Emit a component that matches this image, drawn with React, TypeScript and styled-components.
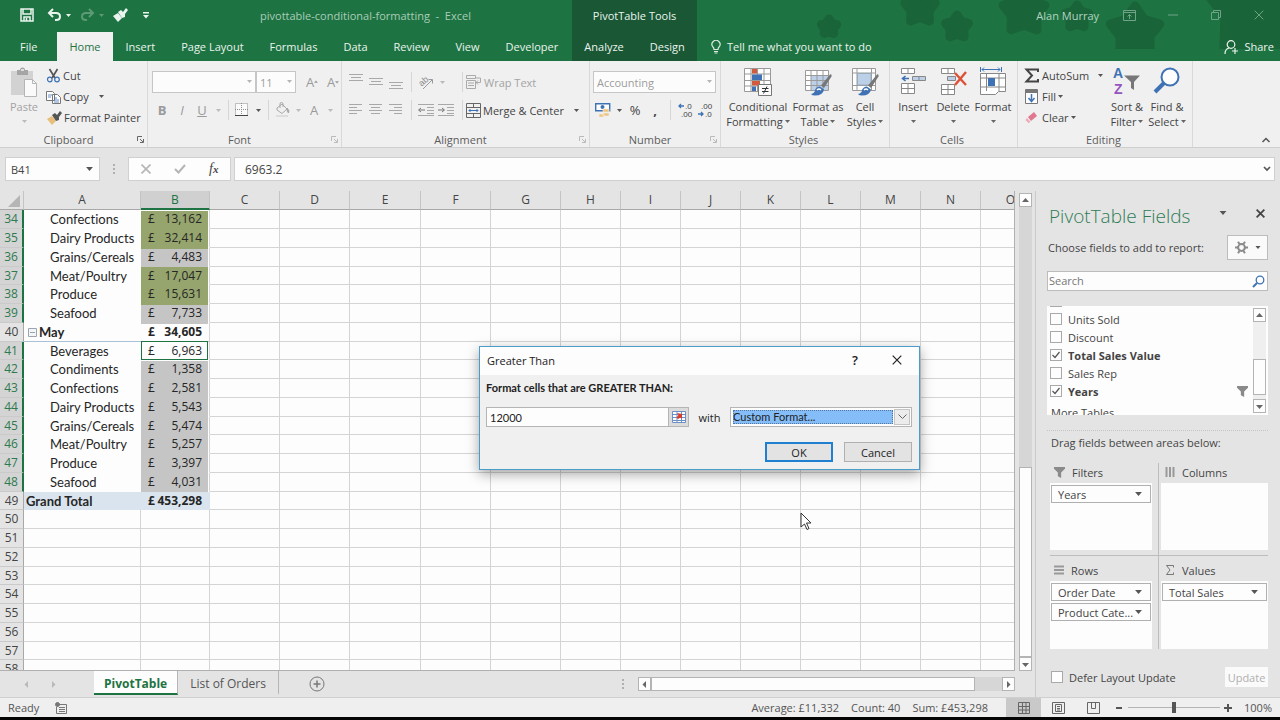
import React, { ReactNode } from 'react';
import styled, { createGlobalStyle, css } from 'styled-components';

const green = '#1e7342';
const ui = '"Open Sans", "Noto Sans", sans-serif';
const sheetFont = 'Lato, "Open Sans", sans-serif';

const GlobalStyle = createGlobalStyle`
  *, *::before, *::after { box-sizing: border-box; }
  body { margin: 0; background: #e4e4e4; overflow: hidden; }
  button, input, select { font: inherit; color: inherit; margin: 0; padding: 0; }
  button { border: 0; background: transparent; }
  svg { display: block; flex: none; }
`;

const Page = styled.div`
  position: relative;
  display: flex;
  flex-direction: column;
  height: 100vh;
  overflow: hidden;
  border-bottom: 3px solid #050505;
  background: #e4e4e4;
  color: #444;
  font: 11px/15px ${ui};
`;

/* ---------- header ---------- */

const Header = styled.header`
  position: relative;
  display: flex;
  flex: none;
  height: 61px;
  background: ${green};
  color: #eaf4ee;
`;
const Confetti = styled.svg`
  position: absolute;
  top: 0;
  right: 0;
`;
const HeaderMain = styled.div`
  display: flex;
  flex-direction: column;
  width: 572px;
`;
const TitleRow = styled.div`
  display: flex;
  align-items: center;
  height: 32px;
  padding-bottom: 2px;
`;
const QuickAccess = styled.div`
  display: flex;
  align-items: center;
  width: 159px;
  padding-left: 20px;
`;
const QuickButton = styled.button<{ $w: number; $dim?: boolean }>`
  display: flex;
  align-items: center;
  width: ${(p) => p.$w}px;
  height: 22px;
  opacity: ${(p) => (p.$dim ? 0.3 : 1)};
`;
const DocTitle = styled.div`
  flex: 1;
  text-align: center;
  color: #a9cdb8;
  white-space: pre;
`;
const TabRow = styled.nav`
  display: flex;
  height: 29px;
  padding-left: 7px;
`;
const RibbonTab = styled.button<{ $active?: boolean; $first?: boolean }>`
  padding: 0 ${(p) => (p.$active ? 12 : 13)}px;
  margin-right: ${(p) => (p.$first ? 7 : 0)}px;
  background: ${(p) => (p.$active ? '#f0f0f0' : 'transparent')};
  color: ${(p) => (p.$active ? green : '#eaf4ee')};
  white-space: nowrap;
`;
const Context = styled.div`
  display: flex;
  flex-direction: column;
  width: 125px;
  background: #195735;
`;
const ContextTitle = styled(TitleRow)`
  justify-content: center;
`;
const ContextTabs = styled.nav`
  display: flex;
  justify-content: center;
  height: 29px;
`;
const HeaderEnd = styled.div`
  display: flex;
  flex: 1;
  flex-direction: column;
`;
const HeaderTools = styled(HeaderEnd)`
  position: relative;
`;
const WindowRow = styled(TitleRow)`
  justify-content: flex-end;
  color: #b4d3c1;
`;
const WindowButton = styled.button`
  display: flex;
  align-items: center;
  justify-content: center;
  width: 43px;
  height: 30px;
  color: #6fa487;
`;
const UserName = styled.span`
  margin-right: 9px;
`;
const TellRow = styled.div`
  display: flex;
  align-items: center;
  justify-content: space-between;
  height: 29px;
  padding: 0 6px 0 14px;
`;
const HeaderAction = styled.button`
  display: flex;
  align-items: center;
  gap: 6px;
`;

/* ---------- ribbon ---------- */

const RibbonBar = styled.div`
  display: flex;
  flex: none;
  height: 87px;
  background: #f0f0f0;
  border-bottom: 1px solid #cfcfcf;
`;
const GroupBox = styled.section<{ $w: number }>`
  display: flex;
  flex-direction: column;
  flex: none;
  width: ${(p) => p.$w}px;
  border-right: 1px solid #d9d9d9;
`;
const GroupBody = styled.div<{ $pad: number }>`
  display: flex;
  flex: 1;
  padding-left: ${(p) => p.$pad}px;
`;
const GroupLabel = styled.footer`
  display: flex;
  align-items: center;
  height: 16px;
  padding-right: 3px;
  color: #5c5c5c;

  span { flex: 1; text-align: center; }
`;
const BigButton = styled.button<{ $w: number; $off?: boolean }>`
  display: flex;
  flex-direction: column;
  align-items: center;
  flex: none;
  width: ${(p) => p.$w}px;
  padding-top: 5px;
  color: ${(p) => (p.$off ? '#a3a3a3' : '#444')};
  white-space: nowrap;

  > svg { margin-bottom: 1px; }
`;
const BigLine = styled.span`
  display: flex;
  align-items: center;
  justify-content: center;
  gap: 2px;
  height: 15px;
`;
const SmallColumn = styled.div`
  display: flex;
  flex-direction: column;
  padding: 4px 0 0 6px;
`;
const SmallButton = styled.button<{ $off?: boolean }>`
  display: flex;
  align-items: center;
  gap: 2px;
  height: 21px;
  color: ${(p) => (p.$off ? '#a3a3a3' : '#444')};
  white-space: nowrap;
`;
const Spread = styled.span<{ $w: number }>`
  width: ${(p) => p.$w}px;
  text-align: left;
`;
const ToolRows = styled.div`
  display: flex;
  flex-direction: column;
  gap: 6px;
  padding-top: 10px;
`;
const ToolRow = styled.div`
  display: flex;
  align-items: center;
  height: 22px;
`;
const Tool = styled.button<{ $w?: number; $off?: boolean }>`
  display: flex;
  align-items: center;
  justify-content: center;
  width: ${(p) => p.$w ?? 20}px;
  height: 22px;
  color: ${(p) => (p.$off ? '#9a9a9a' : '#444')};
  font-size: 13px;
`;
const ToolSep = styled.span<{ $w: number }>`
  display: flex;
  justify-content: center;
  width: ${(p) => p.$w}px;
  height: 20px;

  &::before { content: ''; width: 1px; background: #d6d6d6; }
`;
const Slot = styled.div<{ $w: number }>`
  display: flex;
  align-items: center;
  width: ${(p) => p.$w}px;
`;
const Combo = styled.span<{ $w: number }>`
  position: relative;
  display: flex;
  width: ${(p) => p.$w}px;
  height: 22px;

  select {
    width: 100%;
    padding-left: 3px;
    appearance: none;
    border: 1px solid #c6c6c6;
    border-radius: 0;
    background: #fcfcfc;
    color: #9d9d9d;
  }
  svg { position: absolute; top: 9px; right: 4px; color: #b5b5b5; pointer-events: none; }
`;
const RibbonEnd = styled.div`
  display: flex;
  flex: 1;
  align-items: flex-end;
  justify-content: flex-end;
  padding: 0 9px 2px 0;
`;

/* ---------- formula bar ---------- */

const FormulaBar = styled.div`
  display: flex;
  flex: none;
  height: 43px;
  padding: 9px 5px 10px;
  font-size: 12px;
`;
const NameBox = styled.label`
  display: flex;
  align-items: center;
  width: 95px;
  padding-right: 6px;
  border: 1px solid #d0d0d0;
  background: #fdfdfd;

  input { flex: 1; min-width: 0; padding-left: 5px; border: 0; background: none; font-size: 11px; }
`;
const Grip = styled.span`
  display: flex;
  align-items: center;
  justify-content: center;
  width: 28px;
`;
const FormulaButtons = styled.div`
  display: flex;
  align-items: center;
  justify-content: space-around;
  width: 103px;
  margin-right: 3px;
  border: 1px solid #d0d0d0;
  background: #fdfdfd;
`;
const FxButton = styled.button`
  font: italic 14px/16px "Liberation Serif", serif;

  sub { font-size: 11px; font-weight: 700; vertical-align: baseline; }
`;
const FormulaInput = styled(NameBox)`
  flex: 1;
  padding-right: 3px;

  input { padding-left: 10px; font-size: 12px; }
`;

/* ---------- worksheet ---------- */

const Workspace = styled.main`
  display: flex;
  flex: 1;
  min-height: 0;
`;
const SheetArea = styled.div`
  display: flex;
  flex: 1;
  flex-direction: column;
  min-width: 0;
  border-right: 1px solid #cacaca;
`;
const GridRow = styled.div`
  display: flex;
  flex: 1;
  min-height: 0;
`;
const GridClip = styled.div`
  flex: 1;
  min-width: 0;
  overflow: hidden;
  border-right: 1px solid #b0b0b0;
  border-bottom: 1px solid #b0b0b0;
  background: #fdfdfd;
`;
const Grid = styled.table`
  width: 1041px;
  table-layout: fixed;
  border-collapse: separate;
  border-spacing: 0;
  font-size: 12px;
  line-height: 16px;

  td, th { padding: 0; font-weight: 400; }
  thead tr { height: 19px; }
  tbody tr { height: 19px; }
  tbody tr:nth-child(4n) { height: 18px; }
`;
const ColumnHead = styled.th<{ $on?: boolean }>`
  border-right: 1px solid #c4c4c4;
  border-bottom: ${(p) => (p.$on ? `2px solid ${green}` : '1px solid #a8a8a8')};
  background: ${(p) => (p.$on ? '#d0d0d0' : '#e4e4e4')};
  color: ${(p) => (p.$on ? green : '#444')};
`;
const Corner = styled(ColumnHead)`
  svg { margin: 2px 3px 0 auto; }
`;
const RowHead = styled.th<{ $on?: boolean }>`
  border-bottom: 1px solid #cacaca;
  border-right: ${(p) => (p.$on ? `2px solid ${green}` : '1px solid #a8a8a8')};
  background: ${(p) => (p.$on ? '#d4d4d4' : '#e4e4e4')};
  color: ${(p) => (p.$on ? '#2d7a50' : '#444')};
`;
const Cell = styled.td`
  border-right: 1px solid #d4d4d4;
  border-bottom: 1px solid #d4d4d4;
`;
type RowKind = 'item' | 'group' | 'total';
const kindStyle = css<{ $kind: RowKind }>`
  border-bottom: 1px solid ${(p) => (p.$kind === 'group' ? '#a9c2d8' : p.$kind === 'total' ? '#dae4ef' : 'transparent')};
  background: ${(p) => (p.$kind === 'total' ? '#dae4ef' : 'transparent')};
  && { font-weight: ${(p) => (p.$kind === 'item' ? 400 : 700)}; }
  color: #262626;
`;
const LabelCell = styled.td<{ $kind: RowKind }>`
  ${kindStyle}
  font-family: ${sheetFont};
  font-size: 13px;
  font-variant-ligatures: none;
  white-space: nowrap;
`;
const Label = styled.div<{ $kind: RowKind }>`
  display: flex;
  align-items: center;
  gap: 2px;
  height: 16px;
  padding-left: ${(p) => ({ item: 26, group: 4, total: 2 })[p.$kind]}px;
`;
const MoneyCell = styled.td<{ $kind: RowKind }>`
  ${kindStyle}
  border-right: 1px solid ${(p) => (p.$kind === 'total' ? '#dae4ef' : '#d4d4d4')};
`;
const fills = { green: '#95a56d', grey: '#c5c5c5', none: 'transparent', active: '#fdfdfd' };
const Money = styled.div<{ $fill: keyof typeof fills }>`
  display: flex;
  align-items: center;
  justify-content: space-between;
  height: 17px;
  margin: 0 2px 0 1px;
  padding: 0 5px 0 6px;
  background: ${(p) => fills[p.$fill]};
  box-shadow: ${(p) =>
    p.$fill === 'active' ? `0 0 0 1px ${green}` : p.$fill === 'none' ? 'none' : `0 1px 0 1px ${fills[p.$fill]}`};
`;

const VScroll = styled.div`
  display: flex;
  flex-direction: column;
  width: 13px;
  margin: 2px 3px 0 4px;
  background: #d6d6d6;
`;
const HScroll = styled.div`
  display: flex;
  width: 377px;
  height: 14px;
  background: #d6d6d6;
`;
const ScrollButton = styled.button`
  display: flex;
  align-items: center;
  justify-content: center;
  flex: none;
  width: 13px;
  height: 14px;
  border: 1px solid #b4b4b4;
  background: #fdfdfd;
  color: #666;
`;
const Thumb = styled.span<{ $grow: number }>`
  flex: ${(p) => p.$grow};
  border: 1px solid #b4b4b4;
  background: #fdfdfd;
`;
const Space = styled.span<{ $grow: number }>`
  flex: ${(p) => p.$grow};
`;

const SheetTabs = styled.div`
  display: flex;
  align-items: center;
  flex: none;
  height: 26px;
  padding-right: 20px;
  color: #b9b9b9;
`;
const SheetNav = styled.div`
  display: flex;
  align-items: center;
  justify-content: center;
  gap: 20px;
  width: 94px;
  padding-right: 14px;
`;
const SheetTab = styled.button<{ $active?: boolean }>`
  align-self: flex-start;
  height: 24px;
  padding: 2px ${(p) => (p.$active ? 10 : 12)}px 0;
  border-bottom: ${(p) => (p.$active ? `2px solid ${green}` : '2px solid transparent')};
  border-right: 1px solid #b5b5b5;
  background: ${(p) => (p.$active ? '#fdfdfd' : 'transparent')};
  color: ${(p) => (p.$active ? green : '#555')};
  font-size: 12px;
  font-weight: ${(p) => (p.$active ? 700 : 400)};
`;
const AddSheet = styled.button`
  display: flex;
  margin-left: 30px;
  color: #777;
`;
const TabsGrip = styled.span`
  margin: 0 14px 0 auto;
`;

/* ---------- fields pane ---------- */

const Pane = styled.aside`
  display: flex;
  flex-direction: column;
  flex: none;
  width: 244px;
  padding: 10px 12px 0 11px;
`;
const PaneHead = styled.div`
  display: flex;
  align-items: center;
  height: 30px;

  h2 { flex: 1; margin: 0; padding-left: 2px; color: #2f7c54; font-size: 19px; font-weight: 300; line-height: 26px; white-space: nowrap; }
`;
const PaneIcon = styled.button`
  display: flex;
  width: 10px;
  height: 18px;
  align-items: center;
  justify-content: center;
  margin: 0 0 6px 29px;

  & + & { margin-right: 7px; }
`;
const ChooseRow = styled.div`
  display: flex;
  align-items: center;
  justify-content: space-between;
  height: 26px;
  margin-top: 3px;
  padding-left: 1px;
`;
const GearButton = styled.button`
  display: flex;
  align-items: center;
  justify-content: center;
  gap: 7px;
  width: 41px;
  height: 25px;
  border: 1px solid #bcbcbc;
  background: #fafafa;
`;
const SearchBox = styled.label`
  display: flex;
  align-items: center;
  flex: none;
  height: 20px;
  margin-top: 11px;
  padding-right: 2px;
  border: 1px solid #bcbcbc;
  background: #fdfdfd;

  input { flex: 1; min-width: 0; padding: 0 0 2px 1px; border: 0; background: none; line-height: 15px; }
  input::placeholder { color: #777; opacity: 1; }
`;
const FieldBox = styled.div`
  display: flex;
  flex: none;
  height: 109px;
  margin-top: 15px;
  padding: 0 2px 0 3px;
  background: #fdfdfd;
  overflow: hidden;
`;
const FieldList = styled.div`
  display: flex;
  flex-direction: column;
  flex: 1;
  margin-top: -14px;
`;
const Check = styled.label<{ $bold?: boolean }>`
  display: flex;
  align-items: center;
  flex: none;
  gap: 6px;
  height: 18px;
  font-weight: ${(p) => (p.$bold ? 700 : 400)};

  input {
    width: 12px;
    height: 12px;
    appearance: none;
    border: 1px solid #a9a9a9;
    background: #fdfdfd;
  }
  input:checked {
    background: #fdfdfd url("data:image/svg+xml,%3Csvg xmlns='http://www.w3.org/2000/svg' viewBox='0 0 10 10'%3E%3Cpath d='M1.5 5l2.5 2.5L8.5 2' fill='none' stroke='%23555' stroke-width='1.2'/%3E%3C/svg%3E");
  }
  svg { margin: 0 5px 0 auto; }
`;
const NextTable = styled.div`
  height: 18px;
  margin-top: 5px;
  padding-left: 1px;
`;
const FieldScroll = styled(VScroll)`
  height: 105px;
  margin: 2px 0 0;
  background: #efefef;
`;
const Divider = styled.hr`
  width: 100%;
  margin: 15px 0 4px;
  border: 0;
  border-top: 1px dotted #c4c4c4;
`;
const DragText = styled.div`
  padding-left: 4px;
  line-height: 16px;
`;
const Areas = styled.div`
  display: grid;
  grid-template-columns: 1fr 1fr;
  flex: none;
  margin: 12px 0 0 3px;
`;
const Area = styled.section<{ $side: 'left' | 'right'; $last?: boolean }>`
  height: 93px;
  padding: ${(p) => (p.$last ? 5 : 0)}px ${(p) => (p.$side === 'left' ? 6 : 0)}px 0 ${(p) => (p.$side === 'left' ? 0 : 2)}px;
  border-right: ${(p) => (p.$side === 'left' ? '1px solid #bdbdbd' : '0')};
  border-bottom: ${(p) => (p.$last ? '0' : '1px solid #bdbdbd')};

  h3 { display: flex; align-items: center; gap: 7px; height: 20px; margin: 0; padding: 0 0 2px 4px; font-size: 11px; font-weight: 400; }
`;
const DropZone = styled.div`
  display: flex;
  flex-direction: column;
  gap: 2px;
  height: 68px;
  padding: 2px 1px;
  background: #fdfdfd;
`;
const ShortDropZone = styled(DropZone)`
  height: 67px;
`;
const Pill = styled.button`
  display: flex;
  align-items: center;
  justify-content: space-between;
  height: 18px;
  padding: 0 8px 0 6px;
  border: 1px solid #b0b0b0;
  background: #fdfdfd;
  white-space: nowrap;
`;
const PaneFoot = styled.div`
  display: flex;
  align-items: center;
  justify-content: space-between;
  margin: 18px 0 0 4px;
`;
const UpdateButton = styled.button`
  width: 43px;
  height: 20px;
  background: #fafafa;
  color: #b0b0b0;
`;

/* ---------- status bar ---------- */

const Status = styled.footer`
  display: flex;
  align-items: center;
  flex: none;
  height: 20px;
  padding: 0 8px;
  border-top: 1px solid #cfcfcf;
  background: #efefef;
  color: #555;
`;
const Totals = styled.div`
  display: flex;
  gap: 12px;
  margin: 0 18px 0 auto;
`;
const ViewButton = styled.button<{ $on?: boolean }>`
  display: flex;
  align-items: center;
  justify-content: center;
  width: 35px;
  height: 19px;
  background: ${(p) => (p.$on ? '#c9c9c9' : 'transparent')};
  color: #666;
`;
const ZoomButton = styled.button`
  display: flex;
  width: 9px;
  margin: 0 4px;
`;
const ZoomRange = styled.input`
  width: 92px;
  height: 12px;
  appearance: none;
  background: linear-gradient(#b5b5b5, #b5b5b5) center / 100% 1px no-repeat;

  &::-webkit-slider-thumb { appearance: none; width: 4px; height: 11px; background: #555; }
`;
const ZoomValue = styled.span`
  width: 35px;
  text-align: right;
`;

/* ---------- dialog ---------- */

const Dialog = styled.div`
  position: absolute;
  top: 346px;
  left: 479px;
  width: 441px;
  border: 1px solid #4a9cc9;
  background: #f0f0f0;
  box-shadow: 0 4px 12px rgba(0, 0, 0, 0.35);
  color: #222;
  font-size: 11px;
`;
const DialogTitle = styled.div`
  display: flex;
  align-items: center;
  height: 28px;
  padding: 0 16px 2px 7px;
  background: #fdfdfd;

  span { flex: 1; }
`;
const DialogIcon = styled.button`
  display: flex;
  justify-content: center;
  width: 12px;
  margin-left: 30px;
  font-size: 13px;
  font-weight: 600;
`;
const DialogBody = styled.form`
  display: flex;
  flex-direction: column;
  padding: 5px 7px 7px 6px;
`;
const DialogPrompt = styled.label`
  font-family: ${sheetFont};
  font-weight: 700;
  line-height: 16px;
`;
const DialogFields = styled.div`
  display: flex;
  align-items: center;
  height: 20px;
  margin-top: 11px;
`;
const RefBox = styled.span`
  display: flex;
  width: 203px;
  height: 20px;
  border: 1px solid #b5b5b5;
  background: #fdfdfd;

  input { flex: 1; min-width: 0; padding-left: 3px; border: 0; background: none; font-family: ${sheetFont}; }
  button { display: flex; align-items: center; justify-content: center; width: 20px; background: #dcdcdc; border-left: 1px solid #b5b5b5; }
`;
const WithText = styled.label`
  width: 41px;
  text-align: center;
`;
const FormatSelect = styled.span`
  position: relative;
  display: flex;
  flex: 1;
  height: 20px;
  padding: 2px;
  border: 1px solid #b5b5b5;
  background: #fdfdfd;

  select {
    width: 100%;
    height: 14px;
    margin-right: 16px;
    appearance: none;
    border: 0;
    border-radius: 0;
    outline: 1px dotted #55759b;
    outline-offset: -1px;
    background: #84bdf8;
    font-family: ${sheetFont};
    line-height: 14px;
  }
  span { position: absolute; top: 1px; right: 1px; display: flex; align-items: center; justify-content: center; width: 16px; height: 16px; border: 1px solid #c4c4c4; background: #ececec; pointer-events: none; }
`;
const DialogActions = styled.div`
  display: flex;
  justify-content: flex-end;
  gap: 11px;
  margin-top: 15px;
`;
const DialogButton = styled.button<{ $primary?: boolean }>`
  width: 68px;
  height: 20px;
  border: ${(p) => (p.$primary ? '2px solid #1f7fd1' : '1px solid #b0b0b0')};
  background: #e3e3e3;
`;
const Pointer = styled.svg`
  position: absolute;
  top: 512px;
  left: 800px;
`;

/* ---------- icons ---------- */

const Down = ({ c = 'currentColor', s = 5 }: { c?: string; s?: number }) => (
  <svg width={s} height={Math.ceil(s / 2)} viewBox="0 0 6 3.500"><path d="M0 0h6L3 3.500z" fill={c} /></svg>
);
const Tri = ({ dir, s = 7 }: { dir: 'up' | 'down' | 'left' | 'right'; s?: number }) => (
  <svg width={s} height={s} viewBox="0 0 7 7">
    <path d={{ up: 'M0 5h7L3.500 1z', down: 'M0 2h7L3.500 6z', left: 'M5 0v7L1.500 3.500z', right: 'M2 0v7L5.500 3.500z' }[dir]} fill="currentColor" />
  </svg>
);
const Dots = () => (
  <svg width="2" height="10" viewBox="0 0 2 10"><path d="M0 1h2M0 5h2M0 9h2" stroke="#b0b0b0" strokeWidth="2" /></svg>
);
const Launcher = ({ off }: { off?: boolean }) => (
  <svg width="7" height="7" viewBox="0 0 7 7" fill="none" stroke={off ? '#bbb' : '#666'}><path d="M.5 5V.500H5M3 3l3 3M6.500 3v3.500H3" /></svg>
);
const Lines = ({ rows }: { rows: [number, number][] }) => (
  <svg width="14" height="14" viewBox="0 0 14 14" stroke="#a8a8a8">
    {rows.map(([x, w], i) => <path key={i} d={`M${x} ${i * 3 + 1.5}h${w}`} />)}
  </svg>
);
const VLines = ({ top }: { top: number }) => (
  <svg width="14" height="22" viewBox="0 0 14 22" stroke="#a8a8a8"><path d={`M0 ${top - 1.5}h14M2 ${top + 1.5}h10M0 ${top + 4.5}h14`} /></svg>
);
const Indent = ({ dir }: { dir: 'in' | 'out' }) => (
  <svg width="16" height="14" viewBox="0 0 16 14" fill="none" stroke="#a8a8a8">
    <path d="M0 1.500h16M9 4.500h7M9 7.500h7M9 10.500h7M0 12.500h16" />
    <path stroke="#777" d={dir === 'in' ? 'M0 7h6M4 5l2.500 2L4 9' : 'M7 7H1M3 5L.500 7L3 9'} />
  </svg>
);
const Scissors = () => (
  <svg width="15" height="15" viewBox="0 0 15 15" fill="none">
    <path d="M3.500 1l5.500 9M11.500 1L6 10" stroke="#555" strokeWidth="1.700" />
    <circle cx="3.800" cy="11.500" r="2.300" stroke="#3f72b5" strokeWidth="1.200" /><circle cx="11" cy="11.500" r="2.300" stroke="#3f72b5" strokeWidth="1.200" />
  </svg>
);
const CopyIcon = () => (
  <svg width="15" height="14" viewBox="0 0 15 14" fill="#fff" stroke="#777">
    <path d="M.5 1.500h6l2 2v7h-8zM6.500 4.500h5l3 3v6h-8z" /><path d="M2 5h4M2 7h3M8 8h3M8 10h5M8 12h5" stroke="#3f72b5" strokeWidth=".8" />
  </svg>
);
const Brush = ({ handle, tip }: { handle: string; tip: string }) => (
  <svg width="16" height="16" viewBox="0 0 16 16">
    <path d="M1 9l5-3 4 5-4 4z" fill={tip} /><path d="M6 5l3-2 2 2 3-4 2 2-3 4 0 3-3 1z" fill={handle} />
  </svg>
);
const PasteIcon = () => (
  <svg width="28" height="32" viewBox="0 0 28 32">
    <path d="M1 5h22v24H1z" fill="#d2d2d2" /><path d="M7 9V4h3q0-2.500 2.500-2.500T15 4h3v5z" fill="#a5a5a5" /><path d="M11 4h3" stroke="#f0f0f0" strokeWidth="1.500" />
    <path d="M14.500 13.500h8l4 4v13h-12z" fill="#fafafa" stroke="#b5b5b5" /><path d="M22.500 13.500v4h4" fill="none" stroke="#b5b5b5" />
  </svg>
);
const BordersIcon = () => (
  <svg width="14" height="14" viewBox="0 0 14 14" fill="none" stroke="#8c8c8c"><path fill="#fbfbfb" d="M.5.500h12v12H.5zM6.500 0v13M0 6.500h13" strokeDasharray="1 1" /><path d="M0 12.500h13" stroke="#444" /></svg>
);
const Bucket = () => (
  <svg width="15" height="16" viewBox="0 0 15 16" fill="none" stroke="#a8a8a8"><path d="M2 6l5-4 5 5-5 4.500L2 8zM5 6V2q0-1.500 1.500-1.500T8 2v3" /><path d="M12 6q3 3 1.500 5-1.500-1-1.500-5z" fill="#a8a8a8" /><path d="M1 14h12" stroke="#ddd" strokeWidth="2" /></svg>
);
const Orientation = () => (
  <svg width="17" height="18" viewBox="0 0 17 18" fill="none" stroke="#999">
    <text x="1" y="11" fontSize="9" fill="#8a8a8a" stroke="none" transform="rotate(-40 6 9)" fontFamily="Liberation Sans">ab</text>
    <path d="M5 16l9-9M10.500 6.500H14.500V10.500" />
  </svg>
);
const WrapIcon = () => (
  <svg width="16" height="15" viewBox="0 0 16 15" fill="none" stroke="#aaa"><path d="M.5.500h9v3h-9zM.5 5.500h9v8h-9zM2 8h6M2 10.500h6" /><path d="M10 3h4.500v4.500H10M12 5.500l-2 2 2 2" /></svg>
);
const MergeIcon = () => (
  <svg width="15" height="15" viewBox="0 0 15 15" fill="none" stroke="#666"><path d="M.5.500h14v14H.5zM.5 4.500h14M.5 10.500h14M7.500.500v4M7.500 10.500v4" /><path d="M3 7.500h9M4.500 6L3 7.500 4.500 9M10.500 6L12 7.500 10.500 9" stroke="#3f72b5" /></svg>
);
const MoneyIcon = () => (
  <svg width="16" height="16" viewBox="0 0 16 16"><path d="M.7 1.700h14v7H.7z" fill="#fff" stroke="#3f72b5" strokeWidth="1.400" /><circle cx="7.500" cy="5" r="2" fill="#3f72b5" /><path d="M8 7h6v3H8zM8 11h6v3H8zM4 12h5v3H4z" fill="#eec47c" stroke="#f0f0f0" strokeWidth=".6" /></svg>
);
const DecimalIcon = ({ more }: { more?: boolean }) => (
  <svg width="16" height="18" viewBox="0 0 16 18" fontFamily="Liberation Sans" fontSize="8" fill="#444">
    <text x={more ? 8 : 4} y="8">{more ? '.0' : '.00'}</text><text x={more ? 4 : 8} y="16">{more ? '.00' : '.0'}</text>
    <path fill="none" stroke="#3f72b5" strokeWidth="1.300" d={more ? 'M7 5H2M4 3L2 5L4 7' : 'M1 13h5M4 11l2 2-2 2'} />
  </svg>
);
const CondIcon = () => (
  <svg width="30" height="32" viewBox="0 0 30 32">
    <path d="M1.500 2.500h26v23h-26zM1.500 8h26M1.500 14.500h26M1.500 20h26M8 2v23M14.500 2v23M21 2v23" fill="#fff" stroke="#999" />
    <path d="M9 3h5v4.500H9zM9 15h8v4.500H9z" fill="#d25a3d" /><path d="M9 8.500h10V14H9zM9 20.500h4V25H9z" fill="#3f72b5" />
    <path d="M15.500 18.500h13v11h-13z" fill="#fafafa" stroke="#777" /><path d="M19 22.500h6.500M19 25.500h6.500M24 20.500l-3.500 7" stroke="#333" />
  </svg>
);
const PaintOver = () => (
  <>
    <path d="M27 8.500q2-1 1.500 2L21 22l-3-2.500z" fill="#777" /><path d="M17 20.500l4 3q-1 6-9 6-3 0-4-1.500 4-1 4-4 1.500-3.500 5-3.500z" fill="#3f72b5" /><path d="M14 24q2-2 4 0" stroke="#fff" fill="none" strokeWidth="1.500" />
  </>
);
const TableIcon = () => (
  <svg width="30" height="32" viewBox="0 0 30 32">
    <path d="M2.500 4.500h23v20h-23z" fill="#fff" /><path d="M8 10h17v14H8z" fill="#bcd0e8" />
    <path d="M2.500 4.500h23v20h-23zM2.500 9.500h23M2.500 14.500h23M2.500 19.500h23M8 4v20M14 4v20M20 4v20" fill="none" stroke="#9a9a9a" /><PaintOver />
  </svg>
);
const StylesIcon = () => (
  <svg width="30" height="32" viewBox="0 0 30 32">
    <path d="M2.500 2.500h23v22h-23zM2.500 7h23M2.500 19.500h23M7 2v22M21.500 2v22" fill="#fff" stroke="#9a9a9a" /><path d="M7.500 7.500h13.500v11.500H7.500z" fill="#bcd0e8" stroke="#9ab" /><PaintOver />
  </svg>
);
const InsertIcon = () => (
  <svg width="26" height="32" viewBox="0 0 26 32" fill="#fff" stroke="#888">
    <path d="M1.500 2.500h13v5h-13zM8 2v5M1.500 17.500h13v10h-13zM1.500 22.500h13M8 17v10" /><path d="M12.500 10.500h13v4h-13zM19 10v5" fill="#bcd0e8" /><path d="M9 12.500H3M5.500 10L2.500 12.500l3 2.500" fill="none" stroke="#3f72b5" strokeWidth="1.600" />
  </svg>
);
const DeleteIcon = () => (
  <svg width="28" height="32" viewBox="0 0 28 32" fill="#fff" stroke="#888">
    <path d="M2.500 2.500h13v5h-13zM9 2v5M2.500 18.500h13v10h-13zM2.500 23.500h13M9 18v10" /><path d="M8.500 10.500h8v4h-8z" fill="#bcd0e8" /><path d="M16 7l11 12M27 6L16 19" fill="none" stroke="#dd5136" strokeWidth="2.400" />
  </svg>
);
const FormatIcon = () => (
  <svg width="28" height="32" viewBox="0 0 28 32" fill="#fff" stroke="#888">
    <path d="M1.500 7.500h25v18h-7l-3 3h-15zM1.500 12h25M1.500 21h25M7.500 7v18M20 7v18" /><path d="M9 12h7v8H9z" fill="#3f72b5" stroke="none" /><path d="M3 3.500h18M5 1.500L3 3.500l2 2M19 1.500l2 2-2 2M1.500 1v5M22.500 1v5" fill="none" stroke="#3f72b5" />
  </svg>
);
const SortIcon = () => (
  <svg width="28" height="32" viewBox="0 0 28 32" fontFamily="Liberation Sans" fontSize="14" fontWeight="700">
    <text x="0" y="12" fill="#3f72b5">A</text><text x="1" y="28" fill="#9553c0">Z</text><path d="M11 9.500h16l-6 6.500v8l-3-2v-6z" fill="#777" />
  </svg>
);
const FindIcon = () => (
  <svg width="28" height="32" viewBox="0 0 28 32"><path d="M2 26l9-9" stroke="#3f72b5" strokeWidth="4" /><circle cx="17" cy="11" r="8.500" fill="#fdfdfd" stroke="#3f72b5" strokeWidth="2" /></svg>
);
const SumIcon = () => (
  <svg width="16" height="15" viewBox="0 0 16 15"><path d="M14 4V1.500H2.500L8 7.500l-5.500 6H14V11" fill="none" stroke="#444" strokeWidth="2" /></svg>
);
const FillIcon = () => (
  <svg width="16" height="15" viewBox="0 0 16 15"><path d="M1.500.500h12v14h-12z" fill="#fdfdfd" stroke="#777" /><path d="M1 1h13v3H1z" fill="#777" /><path d="M7.500 5v7M4.500 9l3 3.500L10.500 9" fill="none" stroke="#3f72b5" strokeWidth="1.500" /></svg>
);
const EraserIcon = () => (
  <svg width="16" height="15" viewBox="0 0 16 15"><path d="M4 7l6-5 3 4-6 5z" fill="#e0788f" /><path d="M3 8l3.500 4-2 1L1.500 10z" fill="#eda9b6" /></svg>
);
const Funnel = ({ s = 11 }: { s?: number }) => (
  <svg width={s} height={s} viewBox="0 0 10 10"><path d="M0 0h10v1.500L6.500 5v5l-3-1.500V5L0 1.500z" fill="#8a8a8a" /></svg>
);
const Cross = ({ s, w = 1.3 }: { s: number; w?: number }) => (
  <svg width={s} height={s} viewBox="0 0 10 10"><path d="M.7.700l8.600 8.600M9.300.700L.7 9.300" stroke="currentColor" strokeWidth={w} /></svg>
);
const Gear = () => (
  <svg width="13" height="13" viewBox="0 0 13 13" fill="none" stroke="#8a8a8a"><circle cx="6.500" cy="6.500" r="3.400" strokeWidth="2" /><path d="M4.500 3L3 .8M8.500 3L10 .8M4.500 10L3 12.200M8.500 10l1.500 2.200M0 6.500h3M10 6.500h3" strokeWidth="2" /></svg>
);
const starPath = (cx: number, cy: number, r: number) =>
  Array.from({ length: 10 }, (_, i) => {
    const a = (Math.PI / 5) * i - Math.PI / 2;
    const k = i % 2 ? r * 0.6 : r;
    return `${i ? 'L' : 'M'}${(cx + k * Math.cos(a)).toFixed(1)} ${(cy + k * Math.sin(a)).toFixed(1)}`;
  }).join('') + 'Z';
const stars: [number, number, number][] = [[29, 27, 8], [120, 8, 16], [157, 27, 12], [224, 12, 22], [277, 17, 12], [335, 32, 26], [458, 6, 58]];

/* ---------- data ---------- */

const columns: [string, number][] = [['A', 117], ['B', 69], ['C', 70], ['D', 70], ['E', 71], ['F', 70], ['G', 70], ['H', 60], ['I', 60], ['J', 60], ['K', 60], ['L', 60], ['M', 60], ['N', 60], ['O', 60]];

type PivotRow = { label: string; value: string; kind: RowKind; fill: keyof typeof fills };
const item = (label: string, value: string, fill: keyof typeof fills = 'grey'): PivotRow => ({ label, value, kind: 'item', fill });
const pivot: PivotRow[] = [
  item('Confections', '13,162', 'green'),
  item('Dairy Products', '32,414', 'green'),
  item('Grains/Cereals', '4,483'),
  item('Meat/Poultry', '17,047', 'green'),
  item('Produce', '15,631', 'green'),
  item('Seafood', '7,733'),
  { label: 'May', value: '34,605', kind: 'group', fill: 'none' },
  item('Beverages', '6,963', 'active'),
  item('Condiments', '1,358'),
  item('Confections', '2,581'),
  item('Dairy Products', '5,543'),
  item('Grains/Cereals', '5,474'),
  item('Meat/Poultry', '5,257'),
  item('Produce', '3,397'),
  item('Seafood', '4,031'),
  { label: 'Grand Total', value: '453,298', kind: 'total', fill: 'none' },
];
const firstRow = 34;
const rowCount = 25;

/* ---------- composed parts ---------- */

const Group = ({ name, w, pad, launcher, children }: { name: string; w: number; pad: number; launcher?: 'on' | 'off'; children: ReactNode }) => (
  <GroupBox $w={w} aria-label={name}>
    <GroupBody $pad={pad}>{children}</GroupBody>
    <GroupLabel><span>{name}</span>{launcher && <Launcher off={launcher === 'off'} />}</GroupLabel>
  </GroupBox>
);
const Big = ({ w, icon, lines, off }: { w: number; icon: ReactNode; lines: [string, string?]; off?: boolean }) => (
  <BigButton $w={w} $off={off}>
    {icon}
    <BigLine>{lines[0]}</BigLine>
    <BigLine>{lines[1]}<Down c={off ? '#bbb' : '#666'} /></BigLine>
  </BigButton>
);
const Arrow = ({ off }: { off?: boolean }) => <Tool $w={12} aria-label="More"><Down c={off ? '#bbb' : '#555'} /></Tool>;

const Ribbon = () => (
  <RibbonBar>
    <Group name="Clipboard" w={148} pad={8} launcher="on">
      <Big w={32} icon={<PasteIcon />} lines={['Paste']} off />
      <SmallColumn>
        <SmallButton><Scissors />Cut</SmallButton>
        <SmallButton><CopyIcon /><Spread $w={34}>Copy</Spread><Down c="#555" /></SmallButton>
        <SmallButton><Brush handle="#555" tip="#e8bf7a" />Format Painter</SmallButton>
      </SmallColumn>
    </Group>
    <Group name="Font" w={194} pad={4} launcher="off">
      <ToolRows>
        <ToolRow>
          <Combo $w={104}><select aria-label="Font"><option></option></select><Down /></Combo>
          <Combo $w={40}><select aria-label="Font size"><option>11</option></select><Down /></Combo>
          <Slot $w={5} />
          <Tool $off $w={22}>A<sup><Tri dir="up" s={4} /></sup></Tool>
          <Tool $off $w={20}>A<sup><Tri dir="down" s={4} /></sup></Tool>
        </ToolRow>
        <ToolRow>
          <Tool $off><b>B</b></Tool><Tool $off><i>I</i></Tool><Tool $off><u>U</u></Tool><Arrow off />
          <ToolSep $w={8} /><Tool><BordersIcon /></Tool><Arrow />
          <ToolSep $w={8} /><Tool><Bucket /></Tool><Arrow off /><Tool $off>A</Tool><Arrow off />
        </ToolRow>
      </ToolRows>
    </Group>
    <Group name="Alignment" w={248} pad={4} launcher="off">
      <ToolRows>
        <ToolRow>
          <Tool><VLines top={5} /></Tool><Tool><VLines top={9} /></Tool><Tool><VLines top={13} /></Tool>
          <ToolSep $w={10} />
          <Slot $w={42}><Tool><Orientation /></Tool><Arrow off /></Slot>
          <ToolSep $w={8} />
          <SmallButton $off><WrapIcon />Wrap Text</SmallButton>
        </ToolRow>
        <ToolRow>
          <Tool><Lines rows={[[0, 13], [0, 8], [0, 13], [0, 8]]} /></Tool>
          <Tool><Lines rows={[[0, 13], [2, 9], [0, 13], [2, 9]]} /></Tool>
          <Tool><Lines rows={[[0, 13], [5, 8], [0, 13], [5, 8]]} /></Tool>
          <ToolSep $w={10} />
          <Slot $w={42}><Tool><Indent dir="out" /></Tool><Tool><Indent dir="in" /></Tool></Slot>
          <ToolSep $w={8} />
          <SmallButton><MergeIcon /><Spread $w={89}>Merge &amp; Center</Spread><Down c="#555" /></SmallButton>
        </ToolRow>
      </ToolRows>
    </Group>
    <Group name="Number" w={131} pad={3} launcher="off">
      <ToolRows>
        <ToolRow><Combo $w={123}><select aria-label="Number format"><option>Accounting</option></select><Down /></Combo></ToolRow>
        <ToolRow>
          <Tool><MoneyIcon /></Tool><Arrow /><Tool>%</Tool><Tool><b>,</b></Tool><ToolSep $w={10} />
          <Tool><DecimalIcon more /></Tool><Tool><DecimalIcon /></Tool>
        </ToolRow>
      </ToolRows>
    </Group>
    <Group name="Styles" w={169} pad={5}>
      <Big w={64} icon={<CondIcon />} lines={['Conditional', 'Formatting']} />
      <Big w={56} icon={<TableIcon />} lines={['Format as', 'Table']} />
      <Big w={38} icon={<StylesIcon />} lines={['Cell', 'Styles']} />
    </Group>
    <Group name="Cells" w={128} pad={3}>
      <Big w={40} icon={<InsertIcon />} lines={['Insert']} />
      <Big w={40} icon={<DeleteIcon />} lines={['Delete']} />
      <Big w={40} icon={<FormatIcon />} lines={['Format']} />
    </Group>
    <Group name="Editing" w={175} pad={0}>
      <SmallColumn>
        <SmallButton><SumIcon /><Spread $w={54}>AutoSum</Spread><Down c="#555" /></SmallButton>
        <SmallButton><FillIcon />Fill <Down c="#555" /></SmallButton>
        <SmallButton><EraserIcon />Clear <Down c="#555" /></SmallButton>
      </SmallColumn>
      <Slot $w={4} />
      <Big w={40} icon={<SortIcon />} lines={['Sort &', 'Filter']} />
      <Big w={40} icon={<FindIcon />} lines={['Find &', 'Select']} />
    </Group>
    <RibbonEnd><button aria-label="Collapse ribbon"><svg width="10" height="10" viewBox="0 0 10 10" fill="none" stroke="#555" strokeWidth="1.500"><path d="M1.500 7L5 3.500 8.500 7" /></svg></button></RibbonEnd>
  </RibbonBar>
);

const AreaBox = ({ title, icon, items, side, last }: { title: string; icon: ReactNode; items: string[]; side: 'left' | 'right'; last?: boolean }) => {
  const Zone = last ? DropZone : ShortDropZone;
  return (
    <Area $side={side} $last={last}>
      <h3>{icon}{title}</h3>
      <Zone>{items.map((t) => <Pill key={t}>{t}<Down c="#555" s={7} /></Pill>)}</Zone>
    </Area>
  );
};

export default function App() {
  return (
    <Page>
      <GlobalStyle />
      <Header>
        <HeaderMain>
          <TitleRow>
            <QuickAccess>
              <QuickButton $w={27} aria-label="Save"><svg width="14" height="14" viewBox="0 0 14 14" fill="none" stroke="#eaf4ee" strokeWidth="1.500"><path d="M1 1h12v12H1zM3 1v5h8V1M4 13V9h6v4M6.500 10v3" /></svg></QuickButton>
              <QuickButton $w={19} aria-label="Undo"><svg width="15" height="14" viewBox="0 0 15 14" fill="none" stroke="#eaf4ee" strokeWidth="2"><path d="M6 1L2 5l4 4M2 5h7q4 0 4 3.500T9 12H8" /></svg></QuickButton>
              <QuickButton $w={14} aria-label="Undo list"><Down /></QuickButton>
              <QuickButton $w={19} $dim aria-label="Redo"><svg width="15" height="14" viewBox="0 0 15 14" fill="none" stroke="#eaf4ee" strokeWidth="2"><path d="M9 1l4 4-4 4M13 5H6Q2 5 2 8.500T6 12h1" /></svg></QuickButton>
              <QuickButton $w={13} $dim aria-label="Redo list"><Down /></QuickButton>
              <QuickButton $w={31} aria-label="Format Painter"><Brush handle="#eaf4ee" tip="#eaf4ee" /></QuickButton>
              <QuickButton $w={8} aria-label="Customize"><svg width="6" height="7" viewBox="0 0 6 7" fill="#eaf4ee"><path d="M0 0h6v1.500H0zM0 3h6L3 6.500z" /></svg></QuickButton>
            </QuickAccess>
            <DocTitle>{'pivottable-conditional-formatting  -  Excel'}</DocTitle>
          </TitleRow>
          <TabRow>
            <RibbonTab $first>File</RibbonTab>
            <RibbonTab $active>Home</RibbonTab>
            {['Insert', 'Page Layout', 'Formulas', 'Data', 'Review', 'View', 'Developer'].map((t) => <RibbonTab key={t}>{t}</RibbonTab>)}
          </TabRow>
        </HeaderMain>
        <Context>
          <ContextTitle>PivotTable Tools</ContextTitle>
          <ContextTabs><RibbonTab>Analyze</RibbonTab><RibbonTab>Design</RibbonTab></ContextTabs>
        </Context>
        <HeaderEnd>
          <Confetti width="480" height="49" viewBox="0 0 480 49" fill="#1a6439" stroke="#1a6439" strokeWidth="9" strokeLinejoin="round">
            {stars.map(([x, y, r]) => <path key={x} d={starPath(x, y, r)} />)}
          </Confetti>
          <HeaderTools>
            <WindowRow>
              <UserName>Alan Murray</UserName>
              <WindowButton aria-label="Ribbon options"><svg width="13" height="11" viewBox="0 0 13 11" fill="none" stroke="currentColor"><path d="M.5.500h12v10H.5zM.5 2.500h12M6.500 9V4.500M4.500 6.500l2-2 2 2" /></svg></WindowButton>
              <WindowButton aria-label="Minimize"><svg width="10" height="2"><path d="M0 1h10" stroke="currentColor" /></svg></WindowButton>
              <WindowButton aria-label="Restore"><svg width="10" height="10" viewBox="0 0 10 10" fill="none" stroke="currentColor"><path d="M.5 2.500h7v7h-7zM2.500 2.500v-2h7v7h-2" /></svg></WindowButton>
              <WindowButton aria-label="Close"><Cross s={10} w={1} /></WindowButton>
            </WindowRow>
            <TellRow>
              <HeaderAction>
                <svg width="10" height="14" viewBox="0 0 10 14" fill="none" stroke="#d8eade" strokeWidth="1.200"><path d="M3 9.500q0-1.500-1-2.500a4 4 0 1 1 6 0q-1 1-1 2.500zM3 11.500h4M3.500 13h3" /></svg>
                Tell me what you want to do
              </HeaderAction>
              <HeaderAction>
                <svg width="14" height="14" viewBox="0 0 14 14" fill="none" stroke="#eaf4ee" strokeWidth="1.200"><circle cx="7" cy="4.500" r="3.800" /><path d="M1 14q0-5 4-6M11 8v6M8 11h6" /></svg>
                Share
              </HeaderAction>
            </TellRow>
          </HeaderTools>
        </HeaderEnd>
      </Header>

      <Ribbon />

      <FormulaBar>
        <NameBox><input aria-label="Name box" defaultValue="B41" /><Down c="#555" s={7} /></NameBox>
        <Grip><Dots /></Grip>
        <FormulaButtons>
          <button aria-label="Cancel"><svg width="10" height="10" viewBox="0 0 10 10" stroke="#b5b5b5" strokeWidth="1.600"><path d="M.5.500l9 9M9.500.500l-9 9" /></svg></button>
          <button aria-label="Enter"><svg width="12" height="10" viewBox="0 0 12 10" fill="none" stroke="#b5b5b5" strokeWidth="2"><path d="M1 5l3.500 3.500L11 1" /></svg></button>
          <FxButton aria-label="Insert function">f<sub>x</sub></FxButton>
        </FormulaButtons>
        <FormulaInput>
          <input aria-label="Formula" defaultValue="6963.2" />
          <svg width="8" height="6" viewBox="0 0 8 6" fill="none" stroke="#555" strokeWidth="1.700"><path d="M1 1l3 3 3-3" /></svg>
        </FormulaInput>
      </FormulaBar>

      <Workspace>
        <SheetArea>
          <GridRow>
            <GridClip>
              <Grid>
                <colgroup><col width={24} />{columns.map(([c, w]) => <col key={c} width={w} />)}</colgroup>
                <thead>
                  <tr>
                    <Corner><svg width="12" height="12" viewBox="0 0 12 12"><path d="M12 0v12H0z" fill="#b5b5b5" /></svg></Corner>
                    {columns.map(([c]) => <ColumnHead key={c} $on={c === 'B'}>{c}</ColumnHead>)}
                  </tr>
                </thead>
                <tbody>
                  {Array.from({ length: rowCount }, (_, i) => {
                    const row = pivot[i];
                    return (
                      <tr key={i}>
                        <RowHead $on={row?.kind === 'item'}>{firstRow + i}</RowHead>
                        {row ? (
                          <>
                            <LabelCell $kind={row.kind}>
                              <Label $kind={row.kind}>
                                {row.kind === 'group' && <svg width="9" height="9" viewBox="0 0 9 9" fill="#f3f6f9" stroke="#9aa5b1"><path d="M.5.500h8v8h-8zM2 4.500h5" /></svg>}
                                {row.label}
                              </Label>
                            </LabelCell>
                            <MoneyCell $kind={row.kind}><Money $fill={row.fill}><span>£</span><span>{row.value}</span></Money></MoneyCell>
                          </>
                        ) : (<><Cell /><Cell /></>)}
                        {columns.slice(2).map(([c]) => <Cell key={c} />)}
                      </tr>
                    );
                  })}
                </tbody>
              </Grid>
            </GridClip>
            <VScroll>
              <ScrollButton aria-label="Scroll up"><Tri dir="up" /></ScrollButton>
              <Space $grow={262} /><Thumb $grow={189} />
              <ScrollButton aria-label="Scroll down"><Tri dir="down" /></ScrollButton>
            </VScroll>
          </GridRow>
          <SheetTabs>
            <SheetNav><Tri dir="left" /><Tri dir="right" /></SheetNav>
            <SheetTab $active>PivotTable</SheetTab>
            <SheetTab>List of Orders</SheetTab>
            <AddSheet aria-label="New sheet"><svg width="16" height="16" viewBox="0 0 16 16" fill="none" stroke="currentColor"><circle cx="8" cy="8" r="7" /><path d="M8 4.500v7M4.500 8h7" strokeWidth="1.500" /></svg></AddSheet>
            <TabsGrip><Dots /></TabsGrip>
            <HScroll>
              <ScrollButton aria-label="Scroll left"><Tri dir="left" /></ScrollButton>
              <Thumb $grow={324} /><Space $grow={27} />
              <ScrollButton aria-label="Scroll right"><Tri dir="right" /></ScrollButton>
            </HScroll>
          </SheetTabs>
        </SheetArea>

        <Pane>
          <PaneHead>
            <h2>PivotTable Fields</h2>
            <PaneIcon aria-label="Pane options"><Down c="#555" s={8} /></PaneIcon>
            <PaneIcon aria-label="Close pane"><Cross s={9} w={2} /></PaneIcon>
          </PaneHead>
          <ChooseRow>Choose fields to add to report:<GearButton aria-label="Layout"><Gear /><Down c="#555" s={6} /></GearButton></ChooseRow>
          <SearchBox>
            <input aria-label="Search fields" placeholder="Search" />
            <svg width="13" height="13" viewBox="0 0 13 13" fill="none" stroke="#3f72b5"><circle cx="8" cy="5" r="3.800" strokeWidth="1.300" /><path d="M1 12l4-4" strokeWidth="2" /></svg>
          </SearchBox>
          <FieldBox>
            <FieldList>
              <Check><input type="checkbox" aria-label="Quantity" /></Check>
              <Check><input type="checkbox" />Units Sold</Check>
              <Check><input type="checkbox" />Discount</Check>
              <Check $bold><input type="checkbox" defaultChecked />Total Sales Value</Check>
              <Check><input type="checkbox" />Sales Rep</Check>
              <Check $bold><input type="checkbox" defaultChecked />Years<Funnel /></Check>
              <NextTable>More Tables...</NextTable>
            </FieldList>
            <FieldScroll>
              <ScrollButton aria-label="Scroll up"><Tri dir="up" /></ScrollButton>
              <Space $grow={38} /><Thumb $grow={35} /><Space $grow={4} />
              <ScrollButton aria-label="Scroll down"><Tri dir="down" /></ScrollButton>
            </FieldScroll>
          </FieldBox>
          <Divider />
          <DragText>Drag fields between areas below:</DragText>
          <Areas>
            <AreaBox side="left" title="Filters" icon={<Funnel />} items={['Years']} />
            <AreaBox side="right" title="Columns" icon={<svg width="10" height="10" viewBox="0 0 10 10" stroke="#999" strokeWidth="2"><path d="M1.500 0v10M5 0v10M8.500 0v10" /></svg>} items={[]} />
            <AreaBox side="left" last title="Rows" icon={<svg width="10" height="10" viewBox="0 0 10 10" stroke="#999" strokeWidth="2"><path d="M0 1.500h10M0 5h10M0 8.500h10" /></svg>} items={['Order Date', 'Product Cate...']} />
            <AreaBox side="right" last title="Values" icon={<svg width="10" height="10" viewBox="0 0 10 10" fill="none" stroke="#777"><path d="M8.500 2.500v-2h-7L5 5 1.500 9.500h7v-2" /></svg>} items={['Total Sales']} />
          </Areas>
          <PaneFoot>
            <Check><input type="checkbox" />Defer Layout Update</Check>
            <UpdateButton disabled>Update</UpdateButton>
          </PaneFoot>
        </Pane>
      </Workspace>

      <Status>
        <Slot $w={47}>Ready</Slot>
        <svg width="12" height="12" viewBox="0 0 12 12" fill="none" stroke="#777"><path d="M4 2.500h7.500v9H1.500V5M4 5.500h6M4 7.500h6M4 9.500h6" /><circle cx="2.500" cy="2.500" r="2" fill="#777" /></svg>
        <Totals><span>Average: £11,332</span><span>Count: 40</span><span>Sum: £453,298</span></Totals>
        <ViewButton $on aria-label="Normal"><svg width="12" height="12" viewBox="0 0 12 12" fill="none" stroke="currentColor"><path d="M.5.500h11v11H.5zM4.500 0v12M8 0v12M0 4.500h12M0 8h12" /></svg></ViewButton>
        <ViewButton aria-label="Page layout"><svg width="13" height="12" viewBox="0 0 13 12" fill="none" stroke="currentColor"><path d="M.5.500h12v11H.5zM3.500 2.500h6v7h-6zM5 4.500h3M5 6.500h3M5 8h3" /></svg></ViewButton>
        <ViewButton aria-label="Page break"><svg width="13" height="12" viewBox="0 0 13 12" fill="none" stroke="currentColor"><path d="M.5 11.500V.500h12v11zM4.500 0v6.500h4V0" /></svg></ViewButton>
        <ZoomButton aria-label="Zoom out"><svg width="8" height="8"><path d="M1 4h6" stroke="#555" strokeWidth="2" /></svg></ZoomButton>
        <ZoomRange type="range" aria-label="Zoom" defaultValue={50} />
        <ZoomButton aria-label="Zoom in"><svg width="8" height="8"><path d="M0 4h8M4 0v8" stroke="#555" strokeWidth="2" /></svg></ZoomButton>
        <ZoomValue>100%</ZoomValue>
      </Status>

      <Dialog role="dialog" aria-label="Greater Than">
        <DialogTitle>
          <span>Greater Than</span>
          <DialogIcon>?</DialogIcon>
          <DialogIcon aria-label="Close"><Cross s={10} w={1.2} /></DialogIcon>
        </DialogTitle>
        <DialogBody onSubmit={(e) => e.preventDefault()}>
          <DialogPrompt htmlFor="threshold">Format cells that are GREATER THAN:</DialogPrompt>
          <DialogFields>
            <RefBox>
              <input id="threshold" defaultValue="12000" />
              <button type="button" aria-label="Pick range"><svg width="14" height="12" viewBox="0 0 14 12"><path d="M.5.500h13v11H.5zM0 3.500h14M0 6.500h14M0 9.500h14M5 0v12M9.500 0v12" fill="#fff" stroke="#6d8fc4" /><path d="M5 2l5 1v5L8.500 6.500 6 8 4.500 6.500 6.500 4z" fill="#dd3b2a" /></svg></button>
            </RefBox>
            <WithText htmlFor="format">with</WithText>
            <FormatSelect>
              <select id="format"><option>Custom Format...</option></select>
              <span><svg width="9" height="6" viewBox="0 0 9 6" fill="none" stroke="#666"><path d="M.5.500l4 4 4-4" /></svg></span>
            </FormatSelect>
          </DialogFields>
          <DialogActions>
            <DialogButton $primary>OK</DialogButton>
            <DialogButton type="button">Cancel</DialogButton>
          </DialogActions>
        </DialogBody>
      </Dialog>

      <Pointer width="13" height="19" viewBox="0 0 13 19"><path d="M1 1v14l3.500-3L7 17.500l2-1L6.500 11H11z" fill="#fff" stroke="#333" /></Pointer>
    </Page>
  );
}
